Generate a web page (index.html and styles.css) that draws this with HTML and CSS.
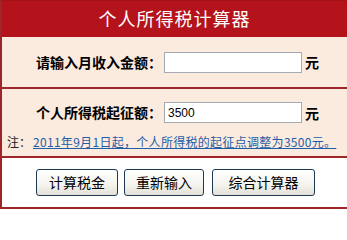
FILE: index.html
```html
<!DOCTYPE html>
<html lang="zh-CN">
<head>
<meta charset="utf-8">
<title>个人所得税计算器</title>
<link rel="stylesheet" href="styles.css">
</head>
<body>
<div class="calc">
  <div class="head">个人所得税计算器</div>
  <div class="row row-income">
    <div class="field">
      <label class="lbl" for="income">请输入月收入金额：</label>
      <input class="inp" id="income" type="text" value="">
      <span class="unit">元</span>
    </div>
  </div>
  <div class="row row-base">
    <div class="field">
      <label class="lbl" for="base">个人所得税起征额：</label>
      <input class="inp" id="base" type="text" value="3500">
      <span class="unit">元</span>
    </div>
    <div class="note">注：<a class="note-link" href="#">2011年9月1日起，个人所得税的起征点调整为3500元。</a></div>
  </div>
  <div class="actions">
    <button class="btn btn-1" type="button">计算税金</button>
    <button class="btn btn-2" type="button">重新输入</button>
    <button class="btn btn-3" type="button">综合计算器</button>
  </div>
</div>
</body>
</html>
```

FILE: styles.css
```css
html, body {
  margin: 0;
  padding: 0;
  background: #ffffff;
}
body {
  font-family: "Noto Sans CJK SC", "Liberation Sans", sans-serif;
  color: #000;
}
.calc {
  width: 345px;
  height: 207px;
  border-left: 2px solid #9e2629;
  border-bottom: 2px solid #9e2629;
  background: #ffffff;
}
.head {
  height: 37px;
  background: #b5131b;
  border-top: 1px solid #a3121a;
  box-sizing: border-box;
  color: #ffffff;
  font-size: 18px;
  letter-spacing: 1px;
  line-height: 35px;
  text-align: center;
}
.row {
  background: #fbeade;
  border-bottom: 2px solid #9e2629;
}
.row-income {
  height: 50px;
  display: flex;
  align-items: center;
}
.row-base {
  padding-top: 13px;
  height: 54px;
}
.field {
  display: flex;
  align-items: center;
  height: 21px;
}
.lbl {
  width: 160px;
  text-align: right;
  font-weight: bold;
  font-size: 14px;
  line-height: 21px;
  white-space: nowrap;
}
.inp {
  box-sizing: border-box;
  width: 138px;
  height: 21px;
  margin: 0 0 0 2px;
  padding: 1px 3px;
  border: 1px solid #a4abb5;
  background: #ffffff;
  font-family: "Liberation Sans", sans-serif;
  font-size: 12px;
  color: #000;
  outline: none;
}
.unit {
  margin-left: 3px;
  font-size: 14px;
  font-weight: bold;
}
.note {
  margin-top: 11px;
  padding-left: 5px;
  font-size: 12px;
  line-height: 16px;
  color: #222;
  white-space: nowrap;
}
.note-link {
  color: #1e5ea8;
  text-decoration: underline;
  margin-left: 2px;
  letter-spacing: 0.3px;
}
.actions {
  display: flex;
  padding: 11px 0 0 34px;
  height: 38px;
}
.btn {
  height: 27px;
  box-sizing: border-box;
  border: 1px solid #1f3a57;
  border-radius: 3px;
  background: linear-gradient(#ffffff, #f4f3ee 60%, #e2e0d6);
  font-family: "Noto Sans CJK SC", sans-serif;
  font-size: 14px;
  color: #000;
  padding: 0;
  line-height: 25px;
}
.btn-1 { width: 82px; }
.btn-2 { width: 80px; margin-left: 6px; }
.btn-3 { width: 103px; margin-left: 8px; }
```
